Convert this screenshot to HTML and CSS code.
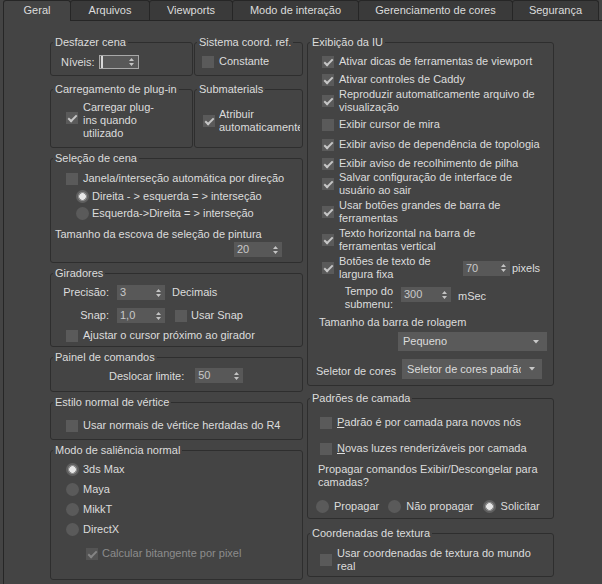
FILE: index.html
```html
<!DOCTYPE html>
<html lang="pt">
<head>
    <meta charset="UTF-8">
    <meta name="viewport" content="width=device-width, initial-scale=1.0">
    <title>Preferências: Geral</title>
    <link rel="stylesheet" href="styles.css">
</head>
<body>
<div class="dialog">
    <div class="tabs">
        <div class="tab tab-geral active">Geral</div>
        <div class="tab tab-arq">Arquivos</div>
        <div class="tab tab-vp">Viewports</div>
        <div class="tab tab-modo">Modo de interação</div>
        <div class="tab tab-cores">Gerenciamento de cores</div>
        <div class="tab tab-seg">Segurança</div>
    </div>

    <div class="page">
        <!-- left column -->
        <div class="col col-left">
            <div class="pair">
                <div class="box box-undo">
                    <div class="box-title">Desfazer cena</div>
                    <div class="undo-row">
                        <span>Níveis:</span>
                        <div class="spin spin-focus">
                            <span class="caret"></span>
                            <svg class="arr" width="5" height="8" viewBox="0 0 5 8"><path d="M2.5 0L5 3H0z M0 5H5L2.5 8z"/></svg>
                        </div>
                    </div>
                </div>
                <div class="box box-coord">
                    <div class="box-title">Sistema coord. ref.</div>
                    <div class="check coord-row"><span class="cb"></span><span>Constante</span></div>
                </div>
            </div>

            <div class="pair pair-plugin">
                <div class="box box-plugin">
                    <div class="box-title">Carregamento de plug-in</div>
                    <div class="check plugin-row"><span class="cb on"></span><span>Carregar plug-<br>ins quando<br>utilizado</span></div>
                </div>
                <div class="box box-submat">
                    <div class="box-title">Submaterials</div>
                    <div class="check submat-row"><span class="cb on"></span><span class="submat-text">Atribuir<br>automaticamente</span></div>
                </div>
            </div>

            <div class="box box-sel">
                <div class="box-title">Seleção de cena</div>
                <div class="check sel-auto"><span class="cb"></span><span>Janela/interseção automática por direção</span></div>
                <div class="sel-dir"><span class="radio on"></span><span>Direita - &gt; esquerda = &gt; interseção</span></div>
                <div class="sel-dir"><span class="radio"></span><span>Esquerda-&gt;Direita = &gt; interseção</span></div>
                <div class="sel-brush">Tamanho da escova de seleção de pintura</div>
                <div class="spin sel-spin">
                    <span>20</span>
                    <svg class="arr" width="5" height="8" viewBox="0 0 5 8"><path d="M2.5 0L5 3H0z M0 5H5L2.5 8z"/></svg>
                </div>
            </div>

            <div class="box box-gir">
                <div class="box-title">Giradores</div>
                <div class="gir-row">
                    <span class="gir-label">Precisão:</span>
                    <div class="spin gir-spin">
                        <span>3</span>
                        <svg class="arr" width="5" height="8" viewBox="0 0 5 8"><path d="M2.5 0L5 3H0z M0 5H5L2.5 8z"/></svg>
                    </div>
                    <span class="gir-unit">Decimais</span>
                </div>
                <div class="gir-row">
                    <span class="gir-label">Snap:</span>
                    <div class="spin gir-spin">
                        <span>1,0</span>
                        <svg class="arr" width="5" height="8" viewBox="0 0 5 8"><path d="M2.5 0L5 3H0z M0 5H5L2.5 8z"/></svg>
                    </div>
                    <div class="check gir-snap"><span class="cb"></span><span>Usar Snap</span></div>
                </div>
                <div class="check gir-adjust"><span class="cb"></span><span>Ajustar o cursor próximo ao girador</span></div>
            </div>

            <div class="box box-cmd">
                <div class="box-title">Painel de comandos</div>
                <div class="cmd-row">
                    <span>Deslocar limite:</span>
                    <div class="spin cmd-spin">
                        <span>50</span>
                        <svg class="arr" width="5" height="8" viewBox="0 0 5 8"><path d="M2.5 0L5 3H0z M0 5H5L2.5 8z"/></svg>
                    </div>
                </div>
            </div>

            <div class="box box-vert">
                <div class="box-title">Estilo normal de vértice</div>
                <div class="check vert-row"><span class="cb"></span><span>Usar normais de vértice herdadas do R4</span></div>
            </div>

            <div class="box box-bump">
                <div class="box-title">Modo de saliência normal</div>
                <div class="bump-list">
                    <div class="bump-opt"><span class="radio on"></span><span>3ds Max</span></div>
                    <div class="bump-opt"><span class="radio"></span><span>Maya</span></div>
                    <div class="bump-opt"><span class="radio"></span><span>MikkT</span></div>
                    <div class="bump-opt"><span class="radio"></span><span>DirectX</span></div>
                </div>
                <div class="check bump-bitan"><span class="cb on dis"></span><span>Calcular bitangente por pixel</span></div>
            </div>
        </div>

        <!-- right column -->
        <div class="col col-right">
            <div class="box box-ui">
                <div class="box-title">Exibição da IU</div>
                <div class="check mt6"><span class="cb on"></span><span>Ativar dicas de ferramentas de viewport</span></div>
                <div class="check mt5"><span class="cb on"></span><span>Ativar controles de Caddy</span></div>
                <div class="check mt2"><span class="cb on"></span><span>Reproduzir automaticamente arquivo de<br>visualização</span></div>
                <div class="check mt4"><span class="cb"></span><span>Exibir cursor de mira</span></div>
                <div class="check mt7"><span class="cb on"></span><span>Exibir aviso de dependência de topologia</span></div>
                <div class="check mt6"><span class="cb on"></span><span>Exibir aviso de recolhimento de pilha</span></div>
                <div class="check mt1"><span class="cb on"></span><span>Salvar configuração de interface de<br>usuário ao sair</span></div>
                <div class="check mt2"><span class="cb on"></span><span>Usar botões grandes de barra de<br>ferramentas</span></div>
                <div class="check mt2"><span class="cb on"></span><span>Texto horizontal na barra de<br>ferramentas vertical</span></div>
                <div class="ui-fixed mt2">
                    <div class="check"><span class="cb on"></span><span class="fixed-text">Botões de texto de<br>largura fixa</span></div>
                    <div class="spin fixed-spin">
                        <span>70</span>
                        <svg class="arr" width="5" height="8" viewBox="0 0 5 8"><path d="M2.5 0L5 3H0z M0 5H5L2.5 8z"/></svg>
                    </div>
                    <span class="fixed-unit">pixels</span>
                </div>
                <div class="ui-tempo">
                    <span class="tempo-label">Tempo do<br>submenu:</span>
                    <div class="spin tempo-spin">
                        <span>300</span>
                        <svg class="arr" width="5" height="8" viewBox="0 0 5 8"><path d="M2.5 0L5 3H0z M0 5H5L2.5 8z"/></svg>
                    </div>
                    <span class="tempo-unit">mSec</span>
                </div>
                <div class="scroll-label">Tamanho da barra de rolagem</div>
                <div class="drop drop-size">
                    <span class="drop-val">Pequeno</span>
                    <svg class="drop-arr" width="6" height="4" viewBox="0 0 6 4"><path d="M0 0H6L3 3.5z"/></svg>
                </div>
                <div class="ui-picker">
                    <span class="picker-label">Seletor de cores</span>
                    <div class="drop drop-picker">
                        <span class="drop-val">Seletor de cores padrão</span>
                        <svg class="drop-arr" width="6" height="4" viewBox="0 0 6 4"><path d="M0 0H6L3 3.5z"/></svg>
                    </div>
                </div>
            </div>

            <div class="box box-layer">
                <div class="box-title">Padrões de camada</div>
                <div class="check layer-opt1"><span class="cb"></span><span><u>P</u>adrão é por camada para novos nós</span></div>
                <div class="check layer-opt2"><span class="cb"></span><span><u>N</u>ovas luzes renderizáveis por camada</span></div>
                <div class="layer-q">Propagar comandos Exibir/Descongelar para<br>camadas?</div>
                <div class="layer-radios">
                    <div class="rad"><span class="radio"></span><span>Propagar</span></div>
                    <div class="rad"><span class="radio"></span><span>Não propagar</span></div>
                    <div class="rad"><span class="radio on"></span><span>Solicitar</span></div>
                </div>
            </div>

            <div class="box box-tex">
                <div class="box-title">Coordenadas de textura</div>
                <div class="check tex-row"><span class="cb"></span><span>Usar coordenadas de textura do mundo<br>real</span></div>
            </div>
        </div>
    </div>
</div>
</body>
</html>
```

FILE: styles.css
```css
* {
    box-sizing: border-box;
}

body {
    margin: 0;
    background-color: #444444;
    color: #dcdcdc;
    font-family: "Liberation Sans", Arial, sans-serif;
    font-size: 11px;
    line-height: 13px;
    overflow: hidden;
}

.dialog {
    padding-left: 3px;
    height: 584px;
}

/* tabs */
.tabs {
    display: flex;
    align-items: flex-start;
    height: 20px;
}

.tab {
    height: 20px;
    margin-left: -1px;
    border: 1px solid #262626;
    border-bottom: none;
    border-radius: 3px 3px 0 0;
    background-color: #3a3a3a;
    text-align: center;
    line-height: 18px;
}

.tab:first-child {
    margin-left: 0;
}

.tab.active {
    position: relative;
    height: 21px;
    margin-bottom: -1px;
    background-color: #444444;
}

.tab-geral { width: 68px; }
.tab-arq { width: 80px; }
.tab-vp { width: 84px; }
.tab-modo { width: 127px; }
.tab-cores { width: 155px; }
.tab-seg { width: 87px; }

.page {
    display: flex;
    gap: 4px;
    height: 564px;
    padding: 21px 0 0 46px;
    border-top: 1px solid #262626;
    border-left: 1px solid #262626;
}

.col-left { width: 253px; }
.col-right { width: 247px; }

.pair {
    display: flex;
    gap: 1px;
}

/* group boxes */
.box {
    border: 1px solid #2e2e2e;
    border-radius: 3px;
    padding-left: var(--pad, 0px);
}

.box-title {
    width: fit-content;
    margin: -7px 0 0 calc(2px - var(--pad, 0px));
    padding: 0 2px;
    background-color: #444444;
}

.box-undo { width: 143px; height: 34px; --pad: 10px; }
.box-coord { width: 109px; height: 34px; --pad: 7px; }
.pair-plugin { margin-top: 13px; }
.box-plugin { width: 143px; height: 59px; --pad: 15px; }
.box-submat { width: 109px; height: 59px; --pad: 8px; }
.box-sel { margin-top: 10px; height: 105px; --pad: 15px; }
.box-gir { margin-top: 10px; height: 74px; --pad: 15px; }
.box-cmd { margin-top: 10px; height: 35px; --pad: 58px; }
.box-vert { margin-top: 10px; height: 38px; --pad: 15px; }
.box-bump { margin-top: 10px; height: 130px; --pad: 15px; }
.box-ui { height: 344px; --pad: 14px; }
.box-layer { margin-top: 12px; height: 121px; --pad: 12px; }
.box-tex { margin-top: 14px; height: 44px; --pad: 12px; }

/* controls */
.check {
    display: flex;
    align-items: center;
    gap: 5px;
}

.cb {
    position: relative;
    flex: none;
    width: 12px;
    height: 12px;
    background-color: #5a5a5a;
}

.cb.on::after {
    content: "";
    position: absolute;
    left: 4px;
    top: 1px;
    width: 3px;
    height: 7px;
    border: solid #c6c6c6;
    border-width: 0 2px 2px 0;
    transform: rotate(45deg);
}

.cb.dis {
    background-color: #545454;
}

.cb.dis::after {
    border-color: #858585;
}

.radio {
    flex: none;
    width: 13px;
    height: 13px;
    border-radius: 50%;
    background-color: #5a5a5a;
}

.radio.on {
    background: radial-gradient(circle, #e6e6e6 0 3px, #8c8c8c 3.6px 4.2px, #606060 4.8px);
}

.spin {
    display: flex;
    align-items: center;
    justify-content: space-between;
    height: 15px;
    padding: 0 4px 0 3px;
    background-color: #585858;
    color: #c8c8c8;
}

.arr {
    fill: #c4c4c4;
}

.spin-focus {
    width: 40px;
    height: 14px;
    margin-left: 4px;
    padding-left: 1px;
    border: 1px solid #a8a8a8;
}

.caret {
    width: 2px;
    height: 12px;
    background-color: #d8d8d8;
}

.drop {
    display: flex;
    align-items: center;
    justify-content: space-between;
    padding: 0 8px 0 5px;
    background-color: #5a5a5a;
}

.drop-val {
    overflow: hidden;
    white-space: nowrap;
}

.drop-arr {
    flex: none;
    fill: #c8c8c8;
}

/* left column rows */
.undo-row {
    display: flex;
    align-items: center;
    margin-top: 6px;
}

.coord-row { margin-top: 6px; }

.plugin-row {
    align-items: flex-start;
    margin-top: 5px;
}

.plugin-row .cb { margin-top: 11px; }

.submat-row {
    gap: 4px;
    margin-top: 12px;
}

.submat-text {
    width: 81px;
    overflow: hidden;
    white-space: nowrap;
}

.sel-auto { margin-top: 7px; }

.sel-dir {
    display: flex;
    align-items: center;
    gap: 3px;
    margin: 5px 0 0 10px;
}

.sel-dir + .sel-dir { margin-top: 4px; }

.sel-brush { margin: 8px 0 0 -11px; }

.sel-spin {
    width: 48px;
    margin: 1px 0 0 168px;
}

.gir-row {
    display: flex;
    align-items: center;
    margin: 5px 0 0 -11px;
}

.gir-row + .gir-row { margin-top: 8px; }

.gir-label {
    width: 54px;
    margin-right: 8px;
    text-align: right;
}

.gir-spin { width: 48px; }
.gir-unit { margin-left: 7px; }

.gir-snap {
    gap: 4px;
    margin-left: 10px;
}

.gir-adjust { margin-top: 6px; }

.cmd-row {
    display: flex;
    align-items: flex-end;
    margin-top: 4px;
}

.cmd-spin {
    width: 48px;
    margin-left: 11px;
}

.vert-row { margin-top: 10px; }

.bump-list { margin-top: 2px; }

.bump-opt {
    display: flex;
    align-items: center;
    gap: 4px;
    height: 20px;
}

.bump-bitan {
    gap: 4px;
    margin: 8px 0 0 20px;
    color: #8c8c8c;
}

/* right column rows */
.mt1 { margin-top: 1px; }
.mt2 { margin-top: 2px; }
.mt4 { margin-top: 4px; }
.mt5 { margin-top: 5px; }
.mt6 { margin-top: 6px; }
.mt7 { margin-top: 7px; }

.ui-fixed {
    display: flex;
    align-items: center;
}

.fixed-text { width: 124px; }
.fixed-spin { width: 47px; }
.fixed-unit { margin-left: 2px; }

.ui-tempo {
    display: flex;
    align-items: flex-start;
    margin-top: 4px;
}

.tempo-label {
    width: 71px;
    text-align: right;
}

.tempo-spin {
    width: 50px;
    margin: 2px 0 0 8px;
}

.tempo-unit { margin: 5px 0 0 7px; }

.scroll-label { margin: 5px 0 0 -3px; }

.drop-size {
    width: 149px;
    height: 19px;
    margin: 3px 0 0 76px;
}

.ui-picker {
    display: flex;
    align-items: flex-start;
    margin: 8px 0 0 -6px;
}

.picker-label { margin-top: 6px; }

.drop-picker {
    width: 140px;
    height: 20px;
    margin-left: 6px;
    padding-right: 7px;
}

.drop-picker .drop-val { width: 114px; }

.layer-opt1 { margin-top: 11px; }
.layer-opt2 { margin-top: 13px; }
.layer-q { margin: 8px 0 0 -2px; }

.layer-radios {
    display: flex;
    gap: 9px;
    margin: 11px 0 0 -4px;
}

.rad {
    display: flex;
    align-items: center;
    gap: 5px;
}

.tex-row { margin-top: 7px; }
```
